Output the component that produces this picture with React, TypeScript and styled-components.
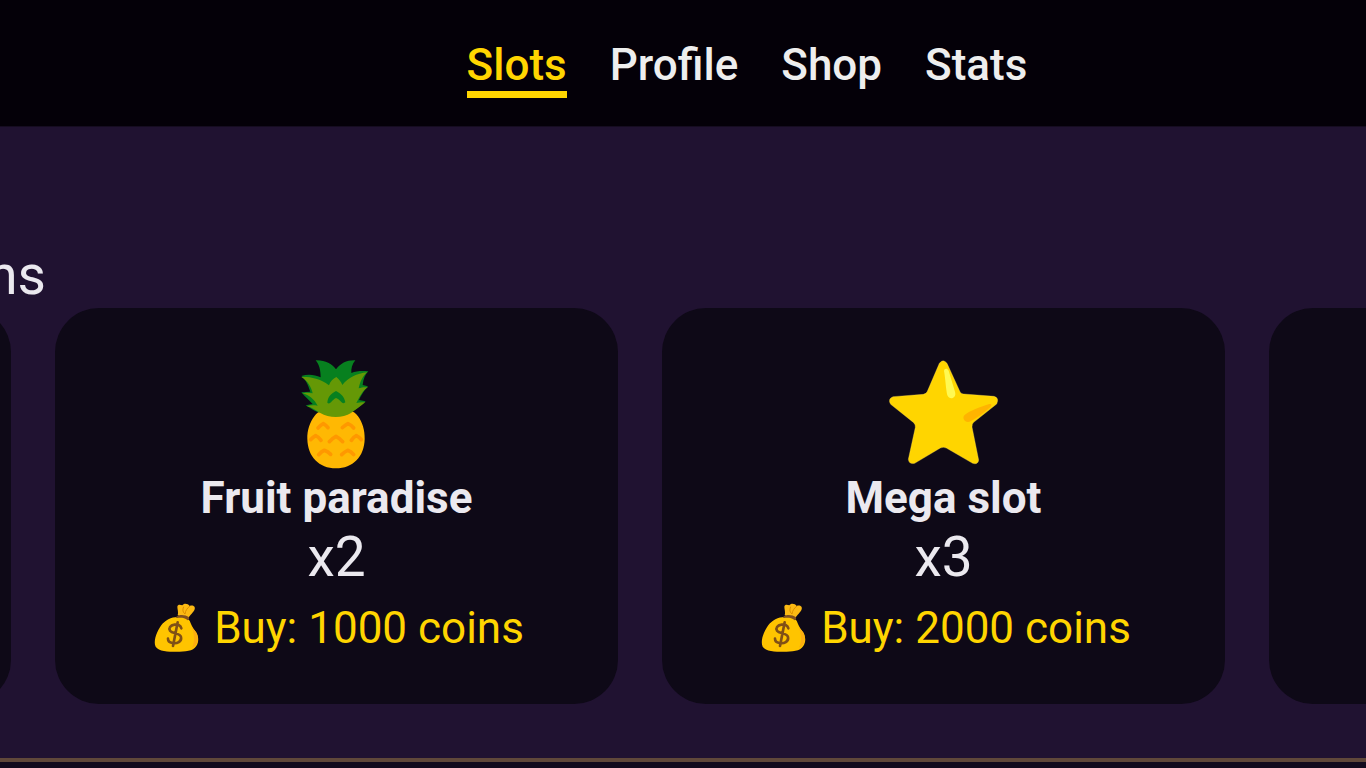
import React from "react";
import styled, { createGlobalStyle } from "styled-components";

const GlobalStyle = createGlobalStyle`
  * { box-sizing: border-box; }
  body {
    margin: 0;
    background: #120b1e;
    color: #ebe9ef;
    font-family: Roboto, "Liberation Sans", sans-serif;
    overflow: hidden;
  }
`;

const Header = styled.header`
  background: #040008;
  border-bottom: 1px solid #150c20;
`;

const Nav = styled.nav`
  display: flex;
  justify-content: center;
  gap: 43px;
  padding: 39px 0 28px 128px;
`;

const NavLink = styled.a<{ $active?: boolean }>`
  color: ${(p) => (p.$active ? "#ffd500" : "#eeeeee")};
  border-bottom: 7px solid ${(p) => (p.$active ? "#ffd500" : "transparent")};
  font-size: 44px;
  font-weight: 500;
  line-height: 52px;
  text-decoration: none;
`;

const Section = styled.main`
  background: #201231;
  border-bottom: 4px solid #60483a;
  padding: 115px 0 54px;
`;

const Balance = styled.div`
  display: flex;
  justify-content: flex-end;
  width: 46px;
  overflow: hidden;
  font-size: 55px;
  line-height: 66px;
`;

const Carousel = styled.div`
  display: flex;
  justify-content: center;
  gap: 44px;
  padding-right: 86px;
  overflow: hidden;
`;

const Card = styled.article`
  flex: 0 0 563px;
  min-height: 396px;
  display: flex;
  flex-direction: column;
  align-items: center;
  padding: 44px;
  border-radius: 44px;
  background: #0e0917;
`;

const CardTitle = styled.h2`
  margin: 0;
  font-size: 44px;
  font-weight: 700;
  line-height: 52px;
`;

const Multiplier = styled.div`
  font-size: 55px;
  line-height: 66px;
`;

const BuyButton = styled.button`
  display: flex;
  align-items: center;
  gap: 11px;
  margin-top: 12px;
  padding: 0;
  border: 0;
  background: none;
  color: #ffd500;
  font-family: inherit;
  font-size: 44px;
  line-height: 52px;
  white-space: nowrap;
  cursor: pointer;
`;

const SlotIcon = styled.svg`
  display: block;
  width: 120px;
  height: 120px;
`;

const BagIcon = styled.svg`
  display: block;
  flex: none;
  width: 54px;
  height: 52px;
`;

function Pineapple() {
  return (
    <SlotIcon viewBox="-9 21 360 360" aria-hidden="true">
      <path
        d="M168 190C200 190 222 197 234 214C247 232 255 256 254 282C253 335 219 370 168 370C117 370 83 335 82 282C81 256 90 232 103 214C115 197 137 190 168 190Z"
        fill="#ffb803"
      />
      <g fill="none" stroke="#ff9800" strokeWidth="11" strokeLinecap="round" strokeLinejoin="round">
        <path d="M114 249Q122 240 130 236Q138 240 144 248" />
        <path d="M187 248Q197 240 204 236Q214 240 221 249" />
        <path d="M92 284Q100 276 107 272Q116 276 123 286" />
        <path d="M148 290Q158 279 168 274Q178 279 188 290" />
        <path d="M214 286Q221 276 229 272Q238 276 244 284" />
        <path d="M116 329Q125 319 133 316Q144 320 152 328" />
        <path d="M185 329Q194 320 203 316Q214 320 221 329" />
      </g>
      <path
        d="M107 46C136 45 155 56 168 73C181 55 201 45 226 46C216 58 213 71 214 84C229 78 246 77 265 79C256 88 250 101 248 120L264 124C255 133 244 150 237 165L257 169C245 180 230 193 212 202L114 202C98 195 86 186 77 181L98 177C87 166 77 157 64 142L91 140C84 120 77 102 64 93C84 87 104 89 122 97C122 77 118 59 107 46Z"
        fill="#07801f"
      />
      <path
        d="M64 96C89 95 119 99 147 121C151 109 159 101 169 96C177 102 184 111 187 120C205 97 230 86 262 82C247 94 240 111 236 130C246 126 255 126 264 127C248 136 240 154 229 174C239 171 248 171 256 172C240 184 227 195 213 204C188 220 147 220 121 204C107 196 95 187 81 184C92 180 102 181 113 182C103 164 88 150 67 145C77 142 87 143 98 145C94 124 82 108 64 96Z"
        fill="#659806"
      />
      <path
        d="M142 173C143 156 154 145 168 138C182 145 194 156 196 172C190 176 187 175 184 171C178 164 172 160 168 159C162 162 157 167 153 172C149 176 145 176 142 173Z"
        fill="#07801f"
      />
    </SlotIcon>
  );
}

function Star() {
  return (
    <SlotIcon viewBox="13 21 360 360" aria-hidden="true">
      <path
        d="M179 55Q190 40 202 55L240 138Q243 147 252 147L343 154Q360 159 351 177L282 232Q276 237 277 246L297 345Q295 360 279 355L200 309Q191 305 182 309L105 355Q88 359 86 343L107 247Q108 239 102 233L33 178Q23 162 40 155L131 148Q140 147 143 139Z"
        fill="#ffd500"
        stroke="#ffe05c"
        strokeWidth="1"
      />
      <path
        d="M193 78C194 70 202 69 207 77L226 140C232 159 210 167 203 151C199 137 197 99 193 78Z"
        fill="#fff952"
      />
      <path
        d="M329 177C337 176 337 182 330 188C313 203 292 219 273 229C257 237 246 220 254 211C267 198 305 184 329 177Z"
        fill="#ffb400"
      />
    </SlotIcon>
  );
}

function MoneyBag() {
  return (
    <BagIcon viewBox="13 21 162 156" aria-hidden="true">
      <path
        d="M99 61C102 52 98 42 98 35C99 28 106 28 113 31C117 24 130 25 135 33C145 29 153 35 150 43C147 53 136 59 130 71Z"
        fill="#fcba13"
      />
      <path d="M117 35C113 44 114 52 121 57C122 47 128 39 136 33" fill="none" stroke="#dc8f00" strokeWidth="3" />
      <path
        d="M92 67C111 63 126 68 135 77C139 88 143 96 151 107C161 118 165 139 155 153C145 169 122 170 95 170C70 170 42 169 33 155C26 140 34 115 45 98C56 81 72 68 92 67Z"
        fill="#ffc400"
      />
      <path
        d="M141 95C147 112 153 137 142 158C164 148 164 122 151 107C145 101 141 97 137 85Z"
        fill="#fcae10"
      />
      <path
        d="M95 65C104 57 123 59 132 66C135 70 133 75 129 76C119 67 107 68 97 69Q92 69 95 65Z"
        fill="#81501f"
      />
      <path
        d="M110 100C108 90 98 87 89 89C77 91 71 99 76 107C83 117 106 113 109 126C112 140 97 147 83 144C74 142 70 137 70 131M99 82L85 153"
        fill="none"
        stroke="#805016"
        strokeWidth="8"
        strokeLinecap="round"
      />
    </BagIcon>
  );
}

const slots = [
  { title: "Fruit paradise", multiplier: "x2", price: 1000, icon: <Pineapple /> },
  { title: "Mega slot", multiplier: "x3", price: 2000, icon: <Star /> },
];

export default function App() {
  return (
    <>
      <GlobalStyle />
      <Header>
        <Nav>
          <NavLink href="#slots" $active aria-current="page">Slots</NavLink>
          <NavLink href="#profile">Profile</NavLink>
          <NavLink href="#shop">Shop</NavLink>
          <NavLink href="#stats">Stats</NavLink>
        </Nav>
      </Header>
      <Section>
        <Balance>ns</Balance>
        <Carousel>
          <Card />
          {slots.map((slot) => (
            <Card key={slot.title}>
              {slot.icon}
              <CardTitle>{slot.title}</CardTitle>
              <Multiplier>{slot.multiplier}</Multiplier>
              <BuyButton>
                <MoneyBag />
                <span>Buy: {slot.price} coins</span>
              </BuyButton>
            </Card>
          ))}
          <Card />
        </Carousel>
      </Section>
    </>
  );
}
